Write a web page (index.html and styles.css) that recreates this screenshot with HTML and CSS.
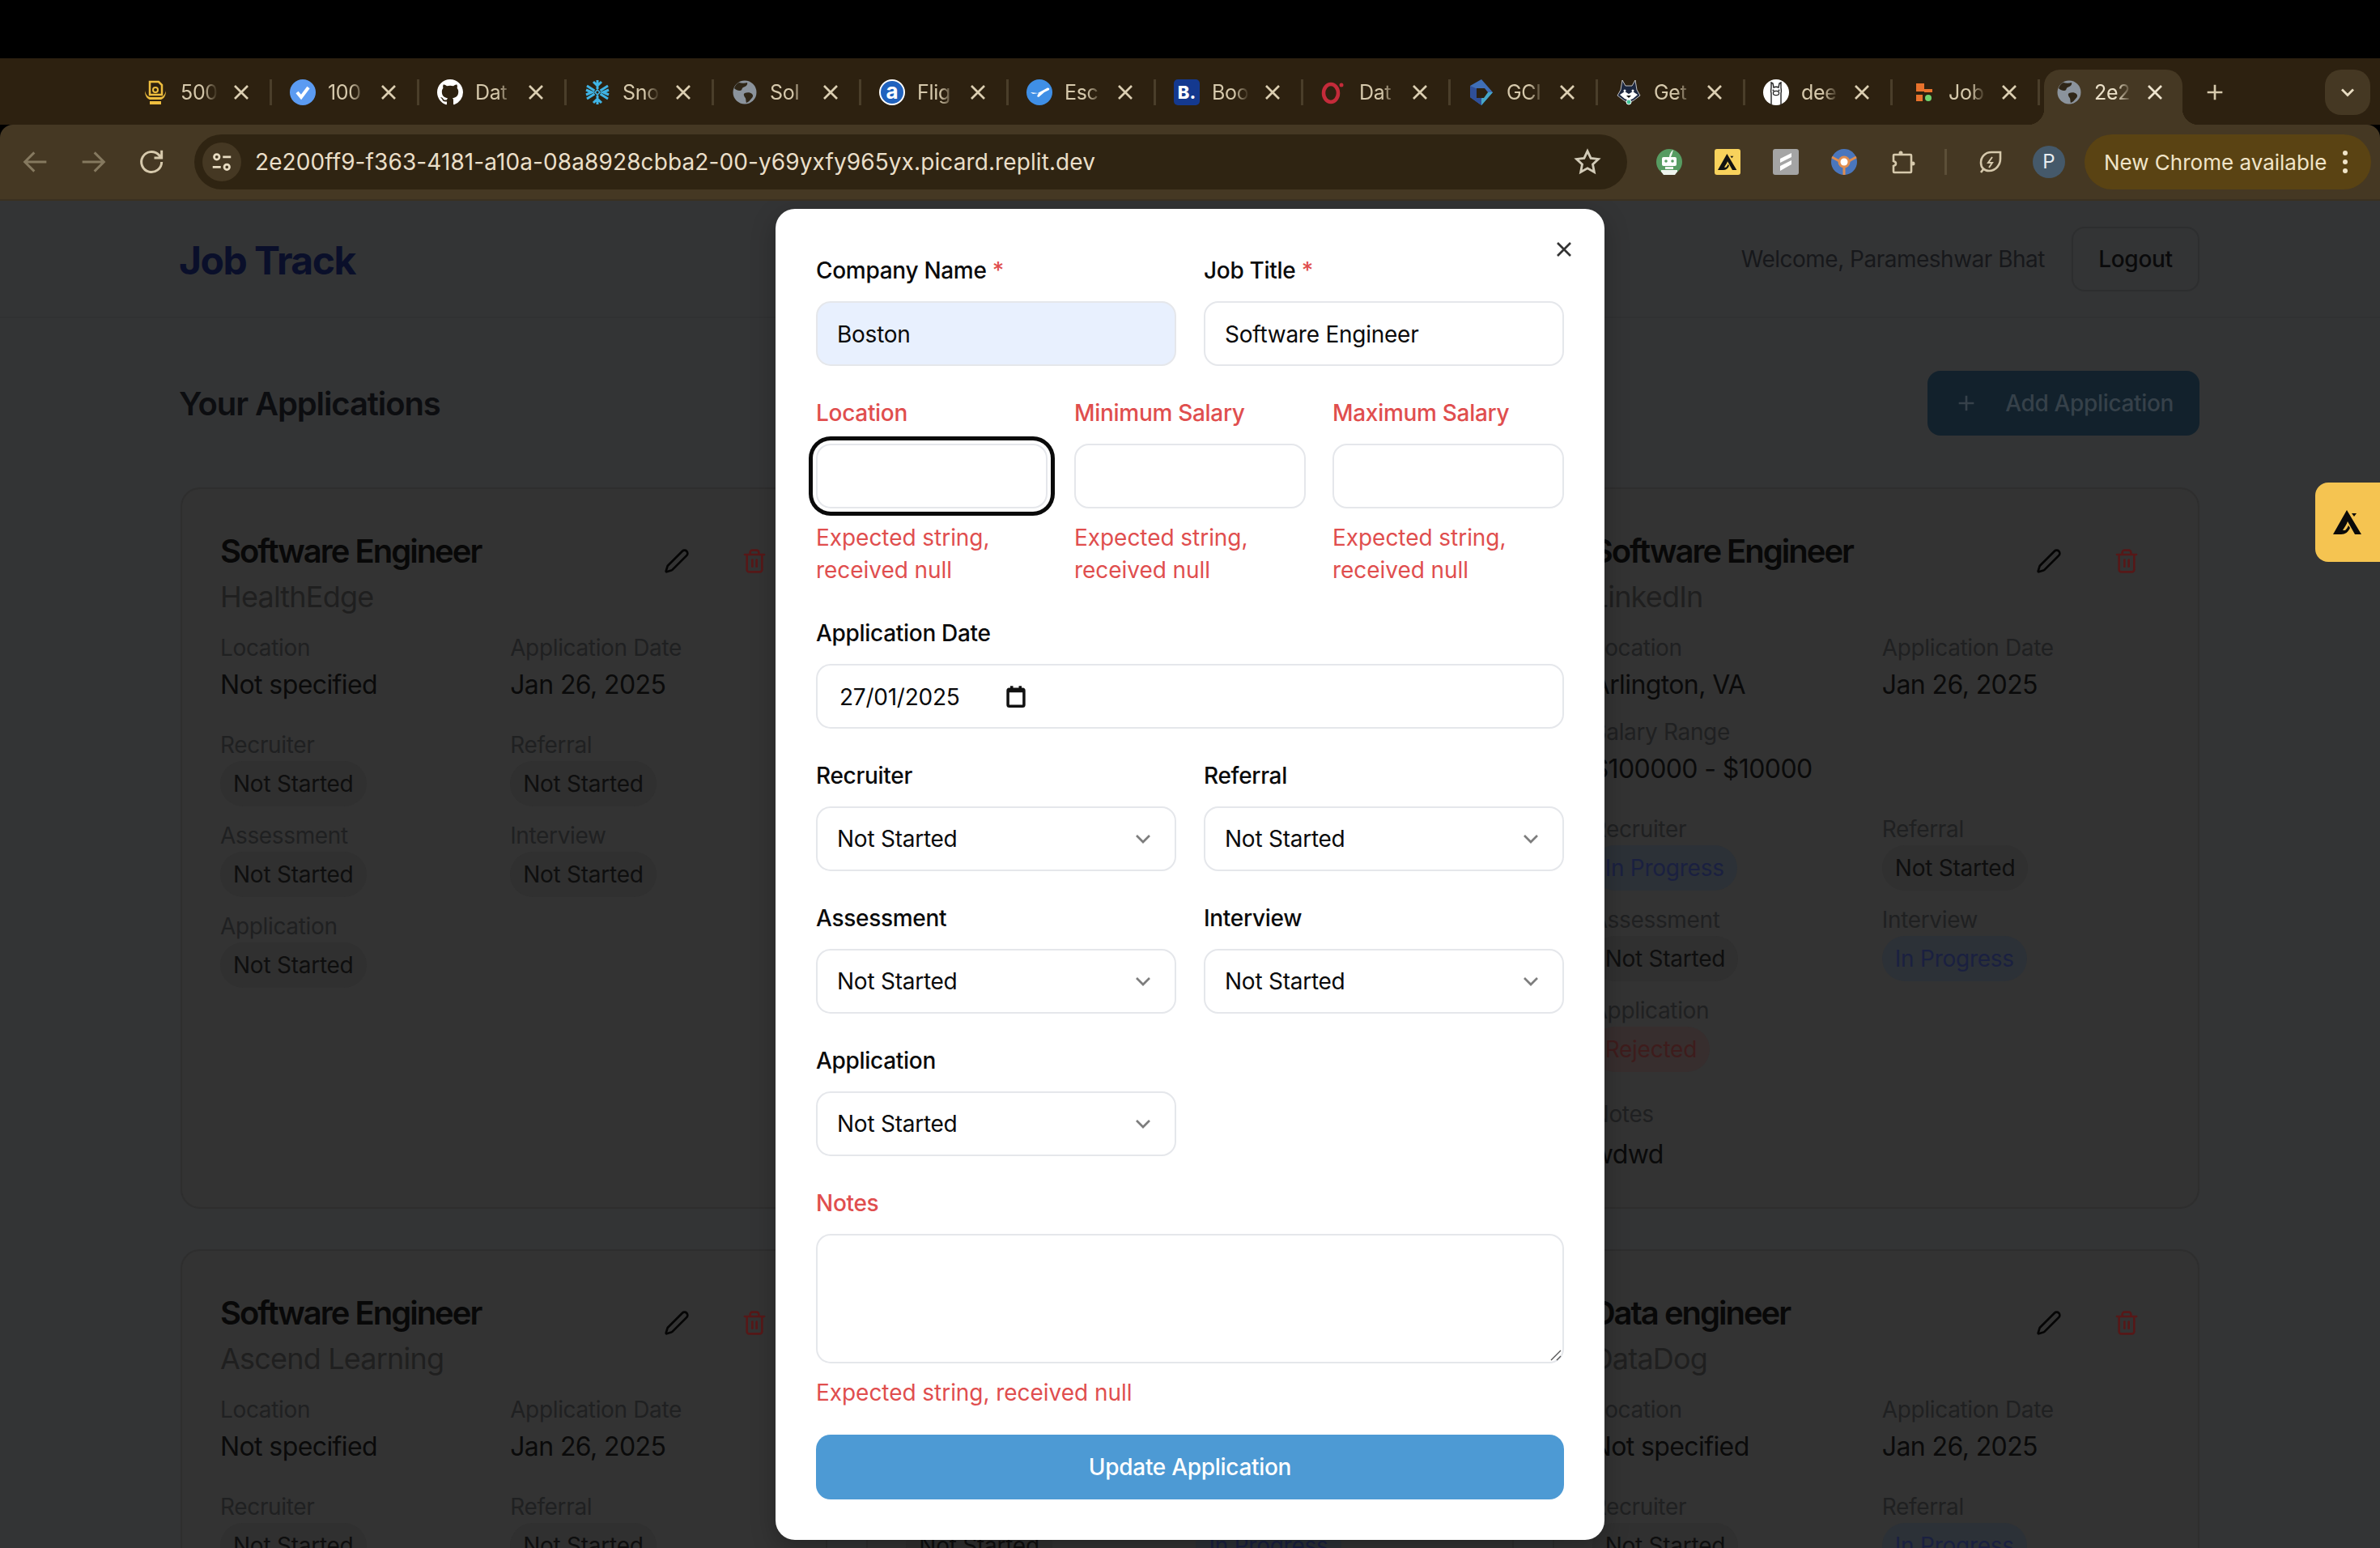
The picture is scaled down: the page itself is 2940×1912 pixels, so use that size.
FILE: index.html
```html
<!DOCTYPE html>
<html lang="en">
<head>
    <meta charset="utf-8">
    <title>Job Track</title>
    <link rel="stylesheet" href="styles.css">
</head>
<body>
<svg class="defs" width="0" height="0">
    <symbol id="i-x" viewBox="0 0 24 24"><path d="M18 6 6 18M6 6l12 12"/></symbol>
    <symbol id="i-chev" viewBox="0 0 24 24"><path d="m6 9 6 6 6-6"/></symbol>
    <symbol id="i-plus" viewBox="0 0 24 24"><path d="M5 12h14M12 5v14"/></symbol>
    <symbol id="i-pencil" viewBox="0 0 24 24"><path d="M21.174 6.812a1 1 0 0 0-3.986-3.987L3.842 16.174a2 2 0 0 0-.5.83l-1.321 4.352a.5.5 0 0 0 .623.622l4.353-1.32a2 2 0 0 0 .83-.497z"/></symbol>
    <symbol id="i-trash" viewBox="0 0 24 24"><path d="M3 6h18M19 6v14c0 1-1 2-2 2H7c-1 0-2-1-2-2V6M8 6V4c0-1 1-2 2-2h4c1 0 2 1 2 2v2M10 11v6M14 11v6"/></symbol>
    <symbol id="i-globe" viewBox="0 0 32 32">
        <circle cx="16" cy="16" r="14.5" fill="#8b939c"/>
        <path d="M9 4c3 1 7 1 10 0 1 3-2 5-5 6-2 1-1 4-4 4-3 0-6-2-7-3 1-3 3-6 6-7zM16 17c3-1 7-1 9 1 2 2 1 4-1 6-2 2-3 4-6 5-1-3 0-5-2-7-1-2-2-4 0-5z" fill="#2f2617"/>
    </symbol>
    <symbol id="i-logo" viewBox="0 0 36 30">
        <path d="M17 0 35 30h-8L18 14c-1 4-4 7-6 11h3c1-1 3-3 4-6l2 3c-2 5-6 8-11 8H0zM23 4h6l-3 4z"/>
    </symbol>
</svg>

<div class="topbar"></div>

<div class="tabstrip">
    <div class="tab">
        <svg class="fav" viewBox="0 0 32 32"><path d="M9 3h11l4 4v12H9z" fill="none" stroke="#edbd3e" stroke-width="2.5"/><circle cx="16" cy="13" r="3" fill="none" stroke="#edbd3e" stroke-width="2"/><path d="M3 14c0 7 3 10 6 11h14c3-1 6-4 6-11-1 5-4 8-7 8H10c-3 0-6-3-7-8zM9 27h14v4H9z" fill="#edbd3e"/></svg>
        <span class="tab-text">500</span>
        <svg class="tab-x"><use href="#i-x"/></svg><i class="tab-sep"></i>
    </div>
    <div class="tab">
        <svg class="fav" viewBox="0 0 32 32"><circle cx="16" cy="16" r="16" fill="#5b9bf2"/><path d="m9 16 5 6 9-12" fill="none" stroke="#fff" stroke-width="4"/></svg>
        <span class="tab-text">100</span>
        <svg class="tab-x"><use href="#i-x"/></svg><i class="tab-sep"></i>
    </div>
    <div class="tab">
        <svg class="fav" viewBox="0 0 16 16"><path fill="#fff" d="M8 0C3.58 0 0 3.58 0 8c0 3.54 2.29 6.53 5.47 7.59.4.07.55-.17.55-.38 0-.19-.01-.82-.01-1.49-2.01.37-2.53-.49-2.69-.94-.09-.23-.48-.94-.82-1.13-.28-.15-.68-.52-.01-.53.63-.01 1.08.58 1.23.82.72 1.21 1.87.87 2.33.66.07-.52.28-.87.51-1.07-1.78-.2-3.64-.89-3.64-3.95 0-.87.31-1.59.82-2.15-.08-.2-.36-1.02.08-2.12 0 0 .67-.21 2.2.82.64-.18 1.32-.27 2-.27.68 0 1.36.09 2 .27 1.53-1.04 2.2-.82 2.2-.82.44 1.1.16 1.92.08 2.12.51.56.82 1.27.82 2.15 0 3.07-1.87 3.75-3.65 3.95.29.25.54.73.54 1.48 0 1.07-.01 1.93-.01 2.2 0 .21.15.46.55.38A8.013 8.013 0 0016 8c0-4.42-3.58-8-8-8z"/></svg>
        <span class="tab-text">Dat</span>
        <svg class="tab-x"><use href="#i-x"/></svg><i class="tab-sep"></i>
    </div>
    <div class="tab">
        <svg class="fav" viewBox="0 0 32 32"><path d="M16 1v11M16 20v11M3 8l9.500 6M19.500 18 29 24M29 8l-9.500 6M12.500 18 3 24M11 3l5 5 5-5M11 29l5-5 5 5M2 13l7 3-7 3M30 13l-7 3 7 3" fill="none" stroke="#3fb4e6" stroke-width="3"/><path d="m16 13 3 3-3 3-3-3z" fill="none" stroke="#3fb4e6" stroke-width="1.600"/></svg>
        <span class="tab-text">Sno</span>
        <svg class="tab-x"><use href="#i-x"/></svg><i class="tab-sep"></i>
    </div>
    <div class="tab">
        <svg class="fav"><use href="#i-globe"/></svg>
        <span class="tab-text">Sol</span>
        <svg class="tab-x"><use href="#i-x"/></svg><i class="tab-sep"></i>
    </div>
    <div class="tab">
        <svg class="fav" viewBox="0 0 32 32"><circle cx="16" cy="16" r="15" fill="#2062be" stroke="#fff" stroke-width="2"/><text x="16" y="24" text-anchor="middle" class="fav-a">a</text></svg>
        <span class="tab-text">Flig</span>
        <svg class="tab-x"><use href="#i-x"/></svg><i class="tab-sep"></i>
    </div>
    <div class="tab">
        <svg class="fav" viewBox="0 0 32 32"><circle cx="16" cy="16" r="16" fill="#3f8fe6"/><path d="M5 16 14 17 25 11c2-1 4 0 3 2l-6 3-7 6-2-1 2-4-7 1z" fill="#fff"/></svg>
        <span class="tab-text">Esc</span>
        <svg class="tab-x"><use href="#i-x"/></svg><i class="tab-sep"></i>
    </div>
    <div class="tab">
        <svg class="fav" viewBox="0 0 32 32"><rect width="32" height="32" rx="5" fill="#14398f"/><text x="16" y="24" text-anchor="middle" class="fav-b">B.</text></svg>
        <span class="tab-text">Boo</span>
        <svg class="tab-x"><use href="#i-x"/></svg><i class="tab-sep"></i>
    </div>
    <div class="tab">
        <svg class="fav" viewBox="0 0 32 32"><ellipse cx="12" cy="17" rx="9" ry="11" fill="none" stroke="#c42b3a" stroke-width="4.500"/><circle cx="25" cy="7" r="2.500" fill="#c42b3a"/></svg>
        <span class="tab-text">Dat</span>
        <svg class="tab-x"><use href="#i-x"/></svg><i class="tab-sep"></i>
    </div>
    <div class="tab">
        <svg class="fav" viewBox="0 0 32 32"><path d="M16 0 30 16 16 32 2 22V8z" fill="#3f6fb8"/><path d="M2 8 16 14 16 32 2 22z" fill="#2f4f98"/><path d="M16 24 23 16 30 16 16 32z" fill="#46a8c8"/><path d="M10 11h10l4 5-5 7h-9z" fill="#2d2110"/></svg>
        <span class="tab-text">GCI</span>
        <svg class="tab-x"><use href="#i-x"/></svg><i class="tab-sep"></i>
    </div>
    <div class="tab">
        <svg class="fav" viewBox="0 0 32 32"><path d="M8 1 12 8h8l4-7 2 12 4 7-8 6-6 3-6-3-8-6 4-7z" fill="#1c2740" stroke="#e8e8e8" stroke-width=".8"/><path d="M5 19l6-4 5 3 5-3 6 4-6 5-5 2-5-2z" fill="#fff"/><circle cx="11" cy="14" r="1.500" fill="#fff"/><circle cx="21" cy="14" r="1.500" fill="#fff"/><path d="M13 20h6l-3 3z" fill="#111"/><circle cx="16" cy="28" r="3" fill="#46c79a" stroke="#fff"/></svg>
        <span class="tab-text">Get</span>
        <svg class="tab-x"><use href="#i-x"/></svg><i class="tab-sep"></i>
    </div>
    <div class="tab">
        <svg class="fav" viewBox="0 0 32 32"><circle cx="16" cy="16" r="16" fill="#fff"/><path d="M10 31V17c-1-3 0-5 0-7V4l2 1 1 5c2-1 4-1 6 0l1-5 2-1v6c0 2 1 4 0 7v14" fill="none" stroke="#222" stroke-width="1.400"/><ellipse cx="16" cy="17" rx="3.600" ry="2.600" fill="none" stroke="#222" stroke-width="1.200"/><circle cx="12.500" cy="13.500" r="1" fill="#222"/><circle cx="19.500" cy="13.500" r="1" fill="#222"/></svg>
        <span class="tab-text">dee</span>
        <svg class="tab-x"><use href="#i-x"/></svg><i class="tab-sep"></i>
    </div>
    <div class="tab">
        <svg class="fav" viewBox="0 0 32 32"><path d="M7 5h10v10H7zM17 12h10v4H17zM7 19h8v8H7z" fill="#e8722c"/><circle cx="22" cy="23" r="4" fill="#71d36f"/></svg>
        <span class="tab-text">Job</span>
        <svg class="tab-x"><use href="#i-x"/></svg><i class="tab-sep"></i>
    </div>
    <div class="tab tab-active">
        <svg class="fav"><use href="#i-globe"/></svg>
        <span class="tab-text">2e2</span>
        <svg class="tab-x"><use href="#i-x"/></svg>
    </div>
    <svg class="tab-plus"><use href="#i-plus"/></svg>
    <div class="tab-menu"><svg><use href="#i-chev"/></svg></div>
</div>

<div class="toolbar">
    <svg class="nav nav-off" viewBox="0 0 24 24"><path d="M20 12H5M11 5l-7 7 7 7"/></svg>
    <svg class="nav nav-off nav-fwd" viewBox="0 0 24 24"><path d="M4 12h15M13 5l7 7-7 7"/></svg>
    <svg class="nav nav-reload" viewBox="0 0 24 24"><path d="M19 12a7.500 7.500 0 1 1-2.200-5.300L19 9M19 3.500V9h-5.500"/></svg>
    <div class="omnibox">
        <div class="site-pill">
            <svg viewBox="0 0 24 24"><circle cx="7" cy="7" r="2.600"/><path d="M13 7h8M3 17h8"/><circle cx="17" cy="17" r="2.600"/></svg>
        </div>
        <span class="url">2e200ff9-f363-4181-a10a-08a8928cbba2-00-y69yxfy965yx.picard.replit.dev</span>
        <svg class="star" viewBox="0 0 24 24"><path d="m12 2.500 2.900 6.200 6.600.8-4.900 4.600 1.300 6.700-5.900-3.300-5.900 3.300 1.300-6.700-4.900-4.600 6.600-.8z"/></svg>
    </div>
    <svg class="ext" viewBox="0 0 32 32"><circle cx="16" cy="16" r="16" fill="#579c62"/><path d="M16 10c0-3 2-7 5-9-1 4-2 7-3 9z" fill="#eef5ee"/><rect x="7" y="10" width="18" height="11" rx="2" fill="#fff"/><circle cx="12" cy="15" r="1.800" fill="#579c62"/><circle cx="20" cy="15" r="1.800" fill="#579c62"/><path d="M11 22h10v3H11zM6 26h20v2l-3 4H9l-3-4z" fill="#eef5ee"/></svg>
    <svg class="ext" viewBox="0 0 32 32"><rect width="32" height="32" rx="3" fill="#f8d25c"/><use href="#i-logo" x="4" y="6" width="24" height="20" fill="#111"/></svg>
    <svg class="ext" viewBox="0 0 32 32"><rect width="32" height="32" rx="3" fill="#a4a4a4"/><path d="m9 12 14-7v5L9 17zM9 21l14-7v5L9 27z" fill="#fff"/></svg>
    <svg class="ext" viewBox="0 0 32 32"><circle cx="16" cy="16" r="16" fill="#4a76bd"/><path d="M1 10l9 5M31 10l-9 5M16 22v10" stroke="#e08d4f" stroke-width="3" fill="none"/><circle cx="16" cy="16" r="7.500" fill="#e08d4f"/><circle cx="16" cy="16" r="4.500" fill="#fff"/></svg>
    <svg class="ext ext-puzzle" viewBox="0 0 32 32"><path d="M6 7h20a1 1 0 0 1 1 1v20a1 1 0 0 1-1 1H6a1 1 0 0 1-1-1v-7c4-1 4-5 0-6V8a1 1 0 0 1 1-1z"/><circle class="knob" cx="14" cy="5" r="2.500"/><circle class="knob" cx="29" cy="18" r="2.500"/></svg>
    <i class="toolbar-sep"></i>
    <svg class="ext ext-leaf" viewBox="0 0 32 32"><path d="M28 4H17C9 4 4 10 4 17c0 6 4 10 10 10 9 0 14-8 14-15zM7 25l-3 4"/><path class="bolt" d="m18 10-5 7h5l-4 6"/></svg>
    <div class="avatar">P</div>
    <div class="update-pill">
        <span>New Chrome available</span>
        <i class="dots"></i>
    </div>
</div>

<div class="page">
    <header class="app-header">
        <h1 class="brand">Job Track</h1>
        <div class="user">
            <span class="welcome">Welcome, Parameshwar Bhat</span>
            <span class="logout">Logout</span>
        </div>
    </header>

    <main class="content">
        <div class="title-row">
            <h2 class="page-title">Your Applications</h2>
            <div class="add-btn"><svg><use href="#i-plus"/></svg><span>Add Application</span></div>
        </div>

        <div class="cards">
            <article class="card">
                <div class="card-top">
                    <div>
                        <h3 class="job">Software Engineer</h3>
                        <p class="company">HealthEdge</p>
                    </div>
                    <div class="actions">
                        <span class="icon-btn"><svg class="edit"><use href="#i-pencil"/></svg></span>
                        <span class="icon-btn"><svg class="trash"><use href="#i-trash"/></svg></span>
                    </div>
                </div>
                <div class="info">
                    <div><div class="lbl">Location</div><div class="val">Not specified</div></div>
                    <div><div class="lbl">Application Date</div><div class="val">Jan 26, 2025</div></div>
                </div>
                <div class="status">
                    <div><div class="lbl">Recruiter</div><span class="badge">Not Started</span></div>
                    <div><div class="lbl">Referral</div><span class="badge">Not Started</span></div>
                    <div><div class="lbl">Assessment</div><span class="badge">Not Started</span></div>
                    <div><div class="lbl">Interview</div><span class="badge">Not Started</span></div>
                    <div><div class="lbl">Application</div><span class="badge">Not Started</span></div>
                </div>
            </article>

            <!-- this one sits fully behind the dialog -->
            <article class="card"></article>

            <article class="card">
                <div class="card-top">
                    <div>
                        <h3 class="job">Software Engineer</h3>
                        <p class="company">LinkedIn</p>
                    </div>
                    <div class="actions">
                        <span class="icon-btn"><svg class="edit"><use href="#i-pencil"/></svg></span>
                        <span class="icon-btn"><svg class="trash"><use href="#i-trash"/></svg></span>
                    </div>
                </div>
                <div class="info">
                    <div><div class="lbl">Location</div><div class="val">Arlington, VA</div></div>
                    <div><div class="lbl">Application Date</div><div class="val">Jan 26, 2025</div></div>
                    <div class="wide"><div class="lbl">Salary Range</div><div class="val">$100000 - $10000</div></div>
                </div>
                <div class="status">
                    <div><div class="lbl">Recruiter</div><span class="badge badge-progress">In Progress</span></div>
                    <div><div class="lbl">Referral</div><span class="badge">Not Started</span></div>
                    <div><div class="lbl">Assessment</div><span class="badge">Not Started</span></div>
                    <div><div class="lbl">Interview</div><span class="badge badge-progress">In Progress</span></div>
                    <div><div class="lbl">Application</div><span class="badge badge-rejected">Rejected</span></div>
                </div>
                <div class="notes">
                    <div class="lbl">Notes</div>
                    <div class="val">wdwd</div>
                </div>
            </article>

            <article class="card">
                <div class="card-top">
                    <div>
                        <h3 class="job">Software Engineer</h3>
                        <p class="company">Ascend Learning</p>
                    </div>
                    <div class="actions">
                        <span class="icon-btn"><svg class="edit"><use href="#i-pencil"/></svg></span>
                        <span class="icon-btn"><svg class="trash"><use href="#i-trash"/></svg></span>
                    </div>
                </div>
                <div class="info">
                    <div><div class="lbl">Location</div><div class="val">Not specified</div></div>
                    <div><div class="lbl">Application Date</div><div class="val">Jan 26, 2025</div></div>
                </div>
                <div class="status">
                    <div><div class="lbl">Recruiter</div><span class="badge">Not Started</span></div>
                    <div><div class="lbl">Referral</div><span class="badge">Not Started</span></div>
                </div>
            </article>

            <!-- only the badges peek out under the dialog -->
            <article class="card">
                <div class="card-hidden"></div>
                <div class="status status-peek">
                    <div><span class="badge">Not Started</span></div>
                    <div><span class="badge badge-progress">In Progress</span></div>
                </div>
            </article>

            <article class="card">
                <div class="card-top">
                    <div>
                        <h3 class="job">Data engineer</h3>
                        <p class="company">DataDog</p>
                    </div>
                    <div class="actions">
                        <span class="icon-btn"><svg class="edit"><use href="#i-pencil"/></svg></span>
                        <span class="icon-btn"><svg class="trash"><use href="#i-trash"/></svg></span>
                    </div>
                </div>
                <div class="info">
                    <div><div class="lbl">Location</div><div class="val">Not specified</div></div>
                    <div><div class="lbl">Application Date</div><div class="val">Jan 26, 2025</div></div>
                </div>
                <div class="status">
                    <div><div class="lbl">Recruiter</div><span class="badge">Not Started</span></div>
                    <div><div class="lbl">Referral</div><span class="badge badge-progress">In Progress</span></div>
                </div>
            </article>
        </div>
    </main>

    <div class="overlay">
        <form class="modal">
            <svg class="modal-close"><use href="#i-x"/></svg>
            <div class="fields">
                <div class="row-2">
                    <div>
                        <div class="flabel">Company Name <span class="req">*</span></div>
                        <div class="input input-filled">Boston</div>
                    </div>
                    <div>
                        <div class="flabel">Job Title <span class="req">*</span></div>
                        <div class="input">Software Engineer</div>
                    </div>
                </div>
                <div class="row-3">
                    <div>
                        <div class="flabel flabel-err">Location</div>
                        <div class="input input-focus"></div>
                        <div class="err">Expected string, received null</div>
                    </div>
                    <div>
                        <div class="flabel flabel-err">Minimum Salary</div>
                        <div class="input"></div>
                        <div class="err">Expected string, received null</div>
                    </div>
                    <div>
                        <div class="flabel flabel-err">Maximum Salary</div>
                        <div class="input"></div>
                        <div class="err">Expected string, received null</div>
                    </div>
                </div>
                <div>
                    <div class="flabel">Application Date</div>
                    <div class="input input-date">
                        <span>27/01/2025</span>
                        <svg class="cal" viewBox="0 0 24 24"><path d="M6 1h3v2h6V1h3v2h1a3 3 0 0 1 3 3v15a3 3 0 0 1-3 3H5a3 3 0 0 1-3-3V6a3 3 0 0 1 3-3h1zM5 8v13h14V8z"/></svg>
                    </div>
                </div>
                <div class="row-2">
                    <div>
                        <div class="flabel">Recruiter</div>
                        <div class="input input-select"><span>Not Started</span><svg><use href="#i-chev"/></svg></div>
                    </div>
                    <div>
                        <div class="flabel">Referral</div>
                        <div class="input input-select"><span>Not Started</span><svg><use href="#i-chev"/></svg></div>
                    </div>
                </div>
                <div class="row-2">
                    <div>
                        <div class="flabel">Assessment</div>
                        <div class="input input-select"><span>Not Started</span><svg><use href="#i-chev"/></svg></div>
                    </div>
                    <div>
                        <div class="flabel">Interview</div>
                        <div class="input input-select"><span>Not Started</span><svg><use href="#i-chev"/></svg></div>
                    </div>
                </div>
                <div class="row-2">
                    <div>
                        <div class="flabel">Application</div>
                        <div class="input input-select"><span>Not Started</span><svg><use href="#i-chev"/></svg></div>
                    </div>
                </div>
                <div>
                    <div class="flabel flabel-err">Notes</div>
                    <div class="input textarea">
                        <svg class="grip" viewBox="0 0 16 16"><path d="M15 3 3 15M15 10l-5 5"/></svg>
                    </div>
                    <div class="err">Expected string, received null</div>
                </div>
            </div>
            <div class="submit">Update Application</div>
        </form>
    </div>

    <div class="side-widget"><svg><use href="#i-logo"/></svg></div>
</div>
</body>
</html>
```

FILE: styles.css
```css
* {
    box-sizing: border-box;
}
html, body {
    margin: 0;
    height: 1912px;
    overflow: hidden;
}
body {
    display: flex;
    flex-direction: column;
    font-family: "Inter", "Liberation Sans", sans-serif;
    background: #000;
}
h1, h2, h3, p {
    margin: 0;
}
.defs {
    position: absolute;
}

/* browser chrome */
.topbar {
    height: 72px;
    flex: none;
    background: #000;
}
.tabstrip {
    height: 82px;
    flex: none;
    display: flex;
    align-items: flex-end;
    padding-left: 154px;
    padding-right: 12px;
    background: #2d2110;
}
.tab {
    width: 182px;
    height: 68px;
    flex: none;
    display: flex;
    align-items: center;
    padding-bottom: 12px;
    position: relative;
}
.fav {
    width: 32px;
    height: 32px;
    flex: none;
    margin-left: 22px;
}
.fav-a {
    font: 700 26px "Inter", sans-serif;
    fill: #fff;
}
.fav-b {
    font: 800 22px "Inter", sans-serif;
    fill: #fff;
}
.tab-text {
    width: 46px;
    flex: none;
    margin-left: 15px;
    font-size: 25px;
    line-height: 32px;
    letter-spacing: -0.3px;
    color: #d6c9ac;
    white-space: nowrap;
    -webkit-mask-image: linear-gradient(90deg, #000 60%, transparent);
    mask-image: linear-gradient(90deg, #000 60%, transparent);
}
.tab-x {
    width: 32px;
    height: 32px;
    flex: none;
    margin-left: 13px;
    fill: none;
    stroke: #dccfb2;
    stroke-width: 2;
}
.tab-sep {
    width: 3px;
    height: 32px;
    flex: none;
    margin-left: auto;
    background: #4a3e2a;
}
.tab-active {
    width: 171px;
    margin: 0 4px 0 5px;
    background: #453823;
    border-radius: 20px 20px 0 0;
}
.tab-active .fav {
    margin-left: 15px;
}
.tab-active .tab-text {
    color: #ebe0c8;
}
.tab-active .tab-x {
    stroke: #efe5cf;
}
.tab-active::before,
.tab-active::after {
    content: "";
    position: absolute;
    bottom: 0;
    width: 20px;
    height: 20px;
}
.tab-active::before {
    left: -20px;
    background: radial-gradient(circle at 0 0, transparent 20px, #453823 20.5px);
}
.tab-active::after {
    right: -20px;
    background: radial-gradient(circle at 100% 0, transparent 20px, #453823 20.5px);
}
.tab-plus {
    width: 32px;
    height: 32px;
    flex: none;
    margin: 0 0 24px 20px;
    fill: none;
    stroke: #d6c9ac;
    stroke-width: 2;
}
.tab-menu {
    width: 56px;
    height: 56px;
    flex: none;
    margin: 0 0 12px auto;
    border-radius: 20px;
    background: #453823;
    display: flex;
    align-items: center;
    justify-content: center;
}
.tab-menu svg {
    width: 28px;
    height: 28px;
    fill: none;
    stroke: #e8dcc2;
    stroke-width: 2.4;
}
.toolbar {
    height: 94px;
    flex: none;
    display: flex;
    align-items: center;
    padding: 0 12px 0 24px;
    background: #453823;
    border-bottom: 2px solid #3a3020;
    border-radius: 16px 16px 0 0;
}
.nav {
    width: 40px;
    height: 40px;
    flex: none;
    fill: none;
    stroke: #d6c9ac;
    stroke-width: 1.8;
}
.nav-off {
    stroke: #85795f;
}
.nav-fwd {
    margin-left: 31px;
}
.nav-reload {
    margin-left: 33px;
}
.omnibox {
    width: 1770px;
    height: 68px;
    flex: none;
    margin-left: 32px;
    display: flex;
    align-items: center;
    padding: 0 32px 0 10px;
    border-radius: 34px;
    background: #2f2412;
}
.site-pill {
    width: 48px;
    height: 48px;
    flex: none;
    border-radius: 24px;
    background: #453823;
    display: flex;
    align-items: center;
    justify-content: center;
}
.site-pill svg {
    width: 30px;
    height: 30px;
    fill: none;
    stroke: #e8dcc2;
    stroke-width: 2.2;
}
.url {
    margin-left: 17px;
    font-size: 28px;
    letter-spacing: 0.1px;
    color: #eadfc9;
    white-space: nowrap;
}
.star {
    width: 34px;
    height: 34px;
    flex: none;
    margin-left: auto;
    fill: none;
    stroke: #d2cbb8;
    stroke-width: 2;
}
.ext {
    width: 32px;
    height: 32px;
    flex: none;
    margin-left: 40px;
}
.omnibox + .ext {
    margin-left: 36px;
}
.ext-puzzle,
.ext-leaf {
    fill: none;
    stroke: #d6c9ac;
    stroke-width: 2.6;
}
.ext-puzzle .knob {
    fill: #d6c9ac;
    stroke: none;
}
.ext-leaf .bolt {
    stroke-width: 2;
}
.toolbar-sep {
    width: 3px;
    height: 32px;
    flex: none;
    margin-left: 36px;
    background: #5c4f38;
}
.ext-leaf {
    margin-left: 38px;
}
.avatar {
    width: 40px;
    height: 40px;
    flex: none;
    margin-left: 36px;
    border-radius: 50%;
    background: #45596a;
    color: #e8edf0;
    font-size: 24px;
    line-height: 40px;
    text-align: center;
}
.update-pill {
    width: 354px;
    height: 68px;
    flex: none;
    margin-left: 24px;
    padding: 0 29px 0 24px;
    border-radius: 34px;
    background: #5a4313;
    display: flex;
    align-items: center;
    justify-content: space-between;
    font-size: 26px;
    color: #f0e4c8;
    white-space: nowrap;
}
.dots {
    width: 6px;
    height: 6px;
    border-radius: 50%;
    background: #f0e4c8;
    box-shadow: 0 -11px 0 #f0e4c8, 0 11px 0 #f0e4c8;
}

/* dimmed app behind the dialog */
.page {
    flex: 1;
    min-height: 0;
    position: relative;
    overflow: hidden;
    background: #333435;
}
.app-header {
    display: flex;
    justify-content: space-between;
    align-items: center;
    height: 145px;
    padding: 0 223px;
    border-bottom: 2px solid #303132;
}
.brand {
    margin: 4px 0 0 -2px;
    font-size: 48px;
    font-weight: 700;
    letter-spacing: -1.5px;
    color: #0a0f2a;
}
.user {
    display: flex;
    align-items: center;
    gap: 33px;
}
.welcome {
    font-size: 28px;
    letter-spacing: -0.5px;
    color: #17181b;
}
.logout {
    width: 158px;
    height: 80px;
    border: 2px solid #2d2e2f;
    border-radius: 16px;
    display: flex;
    align-items: center;
    justify-content: center;
    font-size: 28px;
    font-weight: 500;
    letter-spacing: -0.3px;
    color: #0a0a0b;
}
.content {
    padding: 65px 223px 0;
}
.title-row {
    display: flex;
    justify-content: space-between;
    align-items: center;
    margin-bottom: 64px;
}
.page-title {
    margin-left: -2px;
    font-size: 40px;
    font-weight: 600;
    letter-spacing: -1.1px;
    color: #0c0d10;
}
.add-btn {
    height: 80px;
    display: flex;
    align-items: center;
    gap: 32px;
    padding: 0 32px;
    border-radius: 16px;
    background: #12212c;
    font-size: 28px;
    font-weight: 500;
    letter-spacing: -0.35px;
    color: #36414a;
}
.add-btn svg {
    width: 32px;
    height: 32px;
    fill: none;
    stroke: #36414a;
    stroke-width: 2;
}
.cards {
    display: grid;
    grid-template-columns: repeat(3, 1fr);
    column-gap: 48px;
    row-gap: 50px;
}
.card {
    padding: 49px 48px 43px 47px;
    border: 2px solid #2e2e2e;
    border-radius: 24px;
    background: #333333;
}
.card-top {
    display: flex;
    justify-content: space-between;
}
.job {
    font-size: 40px;
    line-height: 56px;
    font-weight: 600;
    letter-spacing: -2px;
    color: #080808;
}
.company {
    font-size: 36px;
    line-height: 56px;
    letter-spacing: -0.8px;
    color: #1f1f1f;
}
.actions {
    display: flex;
    gap: 16px;
}
.icon-btn {
    width: 80px;
    height: 80px;
    display: flex;
    align-items: center;
    justify-content: center;
}
.icon-btn svg {
    width: 32px;
    height: 32px;
    fill: none;
    stroke-width: 2;
    stroke-linecap: round;
    stroke-linejoin: round;
}
.edit {
    stroke: #050505;
}
.trash {
    stroke: #561818;
}
.info {
    display: grid;
    grid-template-columns: 1fr 1fr;
    gap: 16px;
    margin-top: 15px;
}
.wide {
    grid-column: 1 / 3;
}
.lbl {
    font-size: 28px;
    line-height: 40px;
    letter-spacing: -0.35px;
    color: #1f2021;
}
.val {
    padding-top: 4px;
    font-size: 32px;
    line-height: 44px;
    letter-spacing: -0.6px;
    color: #0a0a0a;
}
.status {
    display: grid;
    grid-template-columns: 1fr 1fr;
    gap: 16px;
    margin-top: 32px;
}
.badge {
    display: inline-block;
    padding: 8px 16px;
    border-radius: 28px;
    background: #303030;
    font-size: 28px;
    line-height: 40px;
    letter-spacing: -0.25px;
    color: #0e0e0e;
}
.badge-progress {
    background: #2c3137;
    color: #1a2040;
}
.badge-rejected {
    background: #372e2e;
    color: #3e1c1c;
}
.notes {
    margin-top: 32px;
}
.notes .val {
    margin-top: 4px;
}
.card-hidden {
    height: 287px;
}
.status-peek {
    margin-top: 0;
}

/* dialog */
.overlay {
    position: absolute;
    inset: 0;
    display: flex;
    align-items: center;
    justify-content: center;
}
.modal {
    width: 1024px;
    padding: 58px 50px 50px;
    border-radius: 24px;
    background: #fff;
    position: relative;
    box-shadow: 0 10px 30px rgba(0, 0, 0, 0.25);
}
.modal-close {
    position: absolute;
    top: 34px;
    right: 34px;
    width: 32px;
    height: 32px;
    fill: none;
    stroke: #333;
    stroke-width: 2;
}
.fields {
    display: flex;
    flex-direction: column;
    gap: 40px;
}
.row-2 {
    display: grid;
    grid-template-columns: 1fr 1fr;
    column-gap: 34px;
}
.row-3 {
    display: grid;
    grid-template-columns: repeat(3, 1fr);
    column-gap: 33px;
}
.flabel {
    margin-bottom: 18px;
    font-size: 28px;
    line-height: 36px;
    padding-bottom: 2px;
    font-weight: 450;
    letter-spacing: -0.3px;
    color: #0a0a0b;
}
.flabel-err {
    color: #e04e4e;
}
.req {
    color: #e04e4e;
}
.input {
    height: 80px;
    padding: 2px 24px 0;
    border: 2px solid #e5e7eb;
    border-radius: 18px;
    background: #fff;
    display: flex;
    align-items: center;
    font-size: 28px;
    letter-spacing: -0.25px;
    color: #0a0a0b;
}
.input-filled {
    background: #e8f0fe;
}
.input-focus {
    box-shadow: 0 0 0 4px #fff, 0 0 0 9px #0a0a0a;
}
.input-date {
    padding-left: 27px;
}
.cal {
    width: 28px;
    height: 28px;
    margin: -2px 0 0 55px;
    fill: #111;
}
.input-select {
    justify-content: space-between;
    padding-top: 0;
}
.input-select svg {
    width: 32px;
    height: 32px;
    margin-right: -1px;
    fill: none;
    stroke: #7d7d7d;
    stroke-width: 2;
}
.textarea {
    height: 160px;
    position: relative;
}
.grip {
    position: absolute;
    right: 1px;
    bottom: 1px;
    width: 16px;
    height: 16px;
    fill: none;
    stroke: #555;
    stroke-width: 1.4;
}
.err {
    margin-top: 16px;
    font-size: 28px;
    line-height: 40px;
    letter-spacing: -0.05px;
    color: #e04e4e;
}
.submit {
    height: 80px;
    margin-top: 32px;
    border-radius: 18px;
    background: #4d9ad4;
    display: flex;
    align-items: center;
    justify-content: center;
    font-size: 28px;
    font-weight: 500;
    letter-spacing: -0.3px;
    color: #fff;
}

.side-widget {
    position: absolute;
    right: 0;
    top: 348px;
    width: 80px;
    height: 98px;
    border-radius: 16px 0 0 16px;
    background: #f5c451;
    display: flex;
    align-items: center;
    padding-left: 22px;
}
.side-widget svg {
    width: 36px;
    height: 30px;
    fill: #0a0a0a;
}
```
